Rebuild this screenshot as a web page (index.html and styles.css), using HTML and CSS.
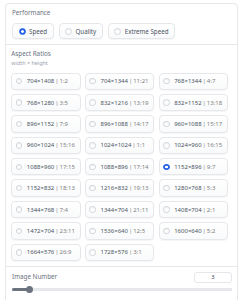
FILE: index.html
```html
<!DOCTYPE html>
<html lang="en">
<head>
  <meta charset="UTF-8">
  <meta name="viewport" content="width=device-width, initial-scale=1.0">
  <title>Settings</title>
  <link rel="stylesheet" href="styles.css">
</head>
<body>
  <div class="panel">
    <div class="block">
      <div class="block-label">Performance</div>
      <div class="perf-options">
        <label class="option perf checked"><span class="dot"></span><span>Speed</span></label>
        <label class="option perf"><span class="dot"></span><span>Quality</span></label>
        <label class="option perf"><span class="dot"></span><span>Extreme Speed</span></label>
      </div>
    </div>

    <div class="block block-ratios">
      <div class="block-label">Aspect Ratios</div>
      <div class="block-info">width × height</div>
      <div class="ratio-grid">
        <label class="option ratio"><span class="dot"></span><span>704×1408 <span class="ratio-part">| 1:2</span></span></label>
        <label class="option ratio"><span class="dot"></span><span>704×1344 <span class="ratio-part">| 11:21</span></span></label>
        <label class="option ratio"><span class="dot"></span><span>768×1344 <span class="ratio-part">| 4:7</span></span></label>
        <label class="option ratio"><span class="dot"></span><span>768×1280 <span class="ratio-part">| 3:5</span></span></label>
        <label class="option ratio"><span class="dot"></span><span>832×1216 <span class="ratio-part">| 13:19</span></span></label>
        <label class="option ratio"><span class="dot"></span><span>832×1152 <span class="ratio-part">| 13:18</span></span></label>
        <label class="option ratio"><span class="dot"></span><span>896×1152 <span class="ratio-part">| 7:9</span></span></label>
        <label class="option ratio"><span class="dot"></span><span>896×1088 <span class="ratio-part">| 14:17</span></span></label>
        <label class="option ratio"><span class="dot"></span><span>960×1088 <span class="ratio-part">| 15:17</span></span></label>
        <label class="option ratio"><span class="dot"></span><span>960×1024 <span class="ratio-part">| 15:16</span></span></label>
        <label class="option ratio"><span class="dot"></span><span>1024×1024 <span class="ratio-part">| 1:1</span></span></label>
        <label class="option ratio"><span class="dot"></span><span>1024×960 <span class="ratio-part">| 16:15</span></span></label>
        <label class="option ratio"><span class="dot"></span><span>1088×960 <span class="ratio-part">| 17:15</span></span></label>
        <label class="option ratio"><span class="dot"></span><span>1088×896 <span class="ratio-part">| 17:14</span></span></label>
        <label class="option ratio checked"><span class="dot"></span><span>1152×896 <span class="ratio-part">| 9:7</span></span></label>
        <label class="option ratio"><span class="dot"></span><span>1152×832 <span class="ratio-part">| 18:13</span></span></label>
        <label class="option ratio"><span class="dot"></span><span>1216×832 <span class="ratio-part">| 19:13</span></span></label>
        <label class="option ratio"><span class="dot"></span><span>1280×768 <span class="ratio-part">| 5:3</span></span></label>
        <label class="option ratio"><span class="dot"></span><span>1344×768 <span class="ratio-part">| 7:4</span></span></label>
        <label class="option ratio"><span class="dot"></span><span>1344×704 <span class="ratio-part">| 21:11</span></span></label>
        <label class="option ratio"><span class="dot"></span><span>1408×704 <span class="ratio-part">| 2:1</span></span></label>
        <label class="option ratio"><span class="dot"></span><span>1472×704 <span class="ratio-part">| 23:11</span></span></label>
        <label class="option ratio"><span class="dot"></span><span>1536×640 <span class="ratio-part">| 12:5</span></span></label>
        <label class="option ratio"><span class="dot"></span><span>1600×640 <span class="ratio-part">| 5:2</span></span></label>
        <label class="option ratio"><span class="dot"></span><span>1664×576 <span class="ratio-part">| 26:9</span></span></label>
        <label class="option ratio"><span class="dot"></span><span>1728×576 <span class="ratio-part">| 3:1</span></span></label>
      </div>
    </div>

    <div class="block block-number">
      <div class="number-head">
        <div class="block-label">Image Number</div>
        <div class="number-input">3</div>
      </div>
      <div class="slider">
        <div class="slider-fill"></div>
        <div class="slider-thumb"></div>
      </div>
    </div>
  </div>
</body>
</html>
```

FILE: styles.css
```css
* {
  margin: 0;
  padding: 0;
  box-sizing: border-box;
}

body {
  background: #fff;
  font-family: "Noto Sans", "Open Sans", sans-serif;
  color: #374151;
}

.panel {
  margin: 3px 4px 0 5px;
  border: 1px solid #e5e7eb;
  border-radius: 4px;
  background: #fff;
  padding-bottom: 10px;
}

.block {
  padding: 5px 6px 5px 6px;
}

.block + .block {
  border-top: 1px solid #e5e7eb;
}

.block-label {
  font-size: 6.3px;
  line-height: 8px;
  color: #6b7280;
}

.block-info {
  margin-top: 2px;
  font-size: 5.4px;
  line-height: 7.5px;
  color: #9ca3af;
}

/* radio boxes */
.option {
  display: flex;
  align-items: center;
  border: 1px solid #e5e7eb;
  border-radius: 4px;
  background: linear-gradient(#ffffff, #f9fafb);
  box-shadow: 0 1px 1px rgba(0, 0, 0, 0.04);
  white-space: nowrap;
  color: #4b5563;
}

.dot {
  flex: none;
  border-radius: 50%;
  border: 1px solid #d1d5db;
  background: #fff;
  box-shadow: inset 0 1px 1px rgba(0, 0, 0, 0.05);
}

.option.checked .dot {
  border-color: #2563eb;
  background: radial-gradient(circle, #fff 0 1.1px, #2563eb 1.6px);
}

.perf-options {
  display: flex;
  gap: 4.5px;
  margin-top: 6px;
}

.option.perf {
  height: 16px;
  padding: 0 6px 0 5.5px;
  font-size: 6.2px;
  gap: 3.5px;
}

.option.perf .dot {
  width: 7px;
  height: 7px;
}

.block-ratios {
  padding: 5px 6px 5px 5.3px;
}

.ratio-grid {
  display: grid;
  grid-template-columns: repeat(3, 69.3px);
  column-gap: 4.4px;
  row-gap: 4px;
  margin-top: 5px;
}

.option.ratio {
  height: 17.4px;
  padding-left: 3.5px;
  gap: 4.5px;
  font-size: 6px;
  word-spacing: -0.6px;
}

.option.ratio .dot {
  width: 6.5px;
  height: 6.5px;
}

.ratio-part {
  color: grey;
}

.block-number {
  padding: 4.8px 5.5px 0 6px;
}

.number-head {
  display: flex;
  justify-content: space-between;
  align-items: center;
}

.number-input {
  width: 37.4px;
  height: 11px;
  border: 1px solid #e5e7eb;
  border-radius: 3px;
  font-size: 5.8px;
  line-height: 9px;
  text-align: center;
  color: #374151;
}

.slider {
  display: flex;
  align-items: center;
  height: 7px;
  margin-top: 3.2px;
  background: linear-gradient(transparent 2px, #e5e7eb 2px, #e5e7eb 5px, transparent 5px);
  border-radius: 2px;
}

.slider-fill {
  width: 17px;
  height: 3px;
  background: #6b7280;
  border-radius: 2px 0 0 2px;
}

.slider-thumb {
  width: 7px;
  height: 7px;
  margin-left: -3.5px;
  border-radius: 50%;
  background: #6b7280;
}
```
